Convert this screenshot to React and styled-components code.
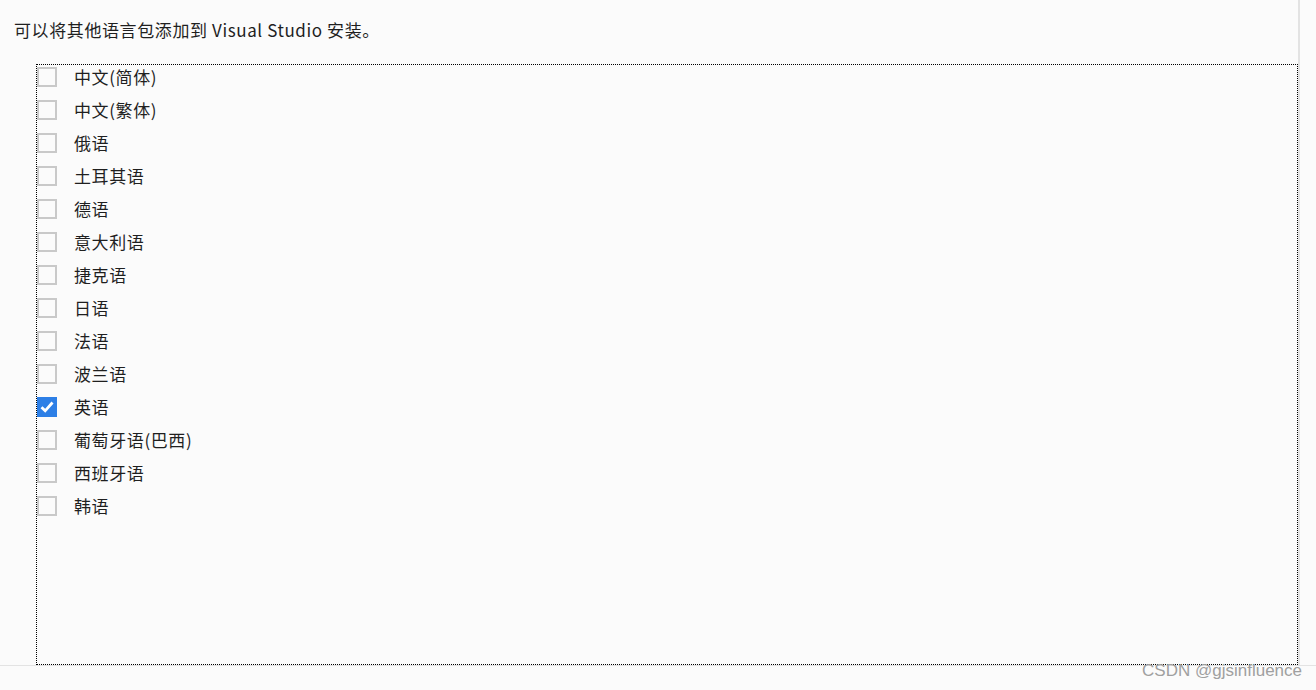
import React from 'react';
import styled, { createGlobalStyle } from 'styled-components';

const GlobalStyle = createGlobalStyle`
    body {
        margin: 0;
        background: #fbfbfb;
        font-family: "Noto Sans CJK SC", "Noto Sans", sans-serif;
        color: #1f1f1f;
    }
`

const Page = styled.div`
    display: flex;
    flex-direction: column;
    width: 1316px;
    height: 690px;
    overflow: hidden;
`

const Main = styled.div`
    display: flex;
    flex-direction: column;
    width: 1300px;
    height: 665px;
    box-sizing: border-box;
    border-right: 2px solid #e3e3e3;
`

const Title = styled.div`
    height: 64px;
    padding: 18px 0 0 14px;
    box-sizing: border-box;
    font-size: 17px;
    letter-spacing: 0.6px;
    line-height: 24px;
`

const LangList = styled.ul`
    list-style: none;
    margin: 0 0 0 36px;
    padding: 0;
    flex: 1;
    display: flex;
    flex-direction: column;
    gap: 9px;
    border: 1px dotted #000;
    box-sizing: border-box;
`

const Row = styled.li`
    display: flex;
    align-items: center;
    height: 24px;
`

const Box = styled.span`
    display: flex;
    align-items: center;
    justify-content: center;
    width: 20px;
    height: 20px;
    box-sizing: border-box;
    border: ${p => (p.checked ? 'none' : '2px solid #c9c9c9')};
    background: ${p => (p.checked ? '#2d7fe6' : 'transparent')};
`

const Label = styled.span`
    margin-left: 17px;
    font-size: 17px;
    letter-spacing: 0.6px;
    line-height: 24px;
`

const Footer = styled.div`
    flex: 1;
    display: flex;
    justify-content: flex-end;
    align-items: flex-start;
    border-top: 1px solid #e3e3e3;
    padding-right: 14px;
`

const Watermark = styled.span`
    font-family: "Liberation Sans", Arial, sans-serif;
    font-size: 17px;
    line-height: 12px;
    margin-top: -1px;
    color: #a0a0a0;
`

const languages = [
    '中文(简体)', '中文(繁体)', '俄语', '土耳其语', '德语', '意大利语', '捷克语',
    '日语', '法语', '波兰语', '英语', '葡萄牙语(巴西)', '西班牙语', '韩语'
]

function App() {
    return (
        <Page>
            <GlobalStyle />
            <Main>
                <Title>可以将其他语言包添加到 Visual Studio 安装。</Title>
                <LangList>
                    {languages.map(name => {
                        const checked = name === '英语'
                        return (
                            <Row key={name}>
                                <Box checked={checked}>
                                    {checked && (
                                        <svg width="14" height="12" viewBox="0 0 14 12">
                                            <path d="M1.5 6.2 L5.2 9.8 L12.5 1.5" fill="none" stroke="#fff" strokeWidth="2.8" />
                                        </svg>
                                    )}
                                </Box>
                                <Label>{name}</Label>
                            </Row>
                        )
                    })}
                </LangList>
            </Main>
            <Footer>
                <Watermark>CSDN @gjsinfluence</Watermark>
            </Footer>
        </Page>
    )
}

export default App
